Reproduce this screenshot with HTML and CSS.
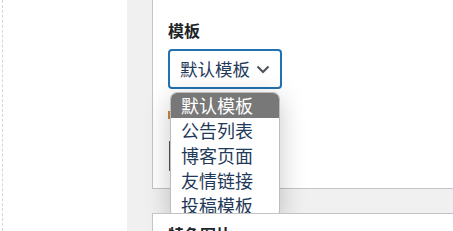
FILE: index.html
```html
<!DOCTYPE html>
<html lang="zh-CN">
<head>
<meta charset="utf-8">
<link rel="stylesheet" href="styles.css">
</head>
<body>
<div class="page">
  <div class="canvas"></div>
  <div class="sidebar">
    <div class="panel">
      <div class="label">模板</div>
      <div class="select">
        <span class="select-text">默认模板</span>
        <svg class="chev" width="14" height="9" viewBox="0 0 14 9"><path d="M1.5 1.5 L7 7 L12.5 1.5" fill="none" stroke="#50575e" stroke-width="2.2"/></svg>
      </div>
      <div class="note"><span class="note-mark"></span></div>
      <div class="box"></div>
      <ul class="dropdown">
        <li class="active">默认模板</li>
        <li>公告列表</li>
        <li>博客页面</li>
        <li>友情链接</li>
        <li>投稿模板</li>
      </ul>
    </div>
    <div class="panel panel2">
      <div class="heading">特色图片</div>
    </div>
  </div>
</div>
</body>
</html>
```

FILE: styles.css
```css
html, body {
  margin: 0;
  padding: 0;
  width: 453px;
  height: 231px;
  overflow: hidden;
  background: #fff;
  font-family: "Noto Sans CJK SC", "Noto Sans", sans-serif;
}
.page {
  display: flex;
  width: 453px;
  height: 231px;
  overflow: hidden;
}
.canvas {
  width: 125px;
  margin-left: 2px;
  border-left: 1px dashed #d6d6d6;
  box-sizing: border-box;
  background: #fff;
}
.sidebar {
  flex: 1;
  background: #f0f0f1;
  padding-left: 25px;
  overflow: hidden;
}
.panel {
  position: relative;
  width: 320px;
  height: 190px;
  margin-top: -1px;
  box-sizing: border-box;
  background: #fff;
  border: 1px solid #c3c4c7;
  padding: 19px 15px 0 15px;
}
.label {
  font-size: 16px;
  font-weight: 700;
  line-height: 22px;
  color: #1d2327;
}
.select {
  margin-top: 8px;
  width: 114px;
  height: 40px;
  box-sizing: border-box;
  border: 2px solid #2271b1;
  border-radius: 4px;
  display: flex;
  align-items: center;
  padding: 0 10px;
  justify-content: space-between;
}
.select-text {
  font-size: 17.5px;
  color: #1f3a5a;
  line-height: 1;
}
.chev {
  margin-top: 1px;
}
.note {
  margin-top: 22px;
  height: 10px;
}
.note-mark {
  display: block;
  width: 3px;
  height: 8px;
  background: #c98a4a;
}
.box {
  margin-top: 20px;
  width: 100px;
  height: 30px;
  border-left: 2px solid #50575e;
  margin-left: 1px;
}
.dropdown {
  position: absolute;
  left: 17px;
  top: 92px;
  width: 110px;
  height: 126px;
  box-sizing: border-box;
  margin: 0;
  padding: 0;
  list-style: none;
  background: #fff;
  border: 1px solid #bdbdbd;
  border-radius: 7px;
  overflow: hidden;
  box-shadow: 0 6px 26px rgba(0, 0, 0, 0.22);
}
.dropdown li {
  height: 25px;
  line-height: 25px;
  font-size: 18px;
  padding-left: 10px;
  color: #1f3a5a;
}
.dropdown li.active {
  background: #787878;
  color: #fff;
}
.panel2 {
  margin-top: 24px;
  height: 60px;
  padding-top: 9px;
}
.heading {
  font-size: 16px;
  font-weight: 700;
  line-height: 22px;
  color: #1d2327;
}
```
